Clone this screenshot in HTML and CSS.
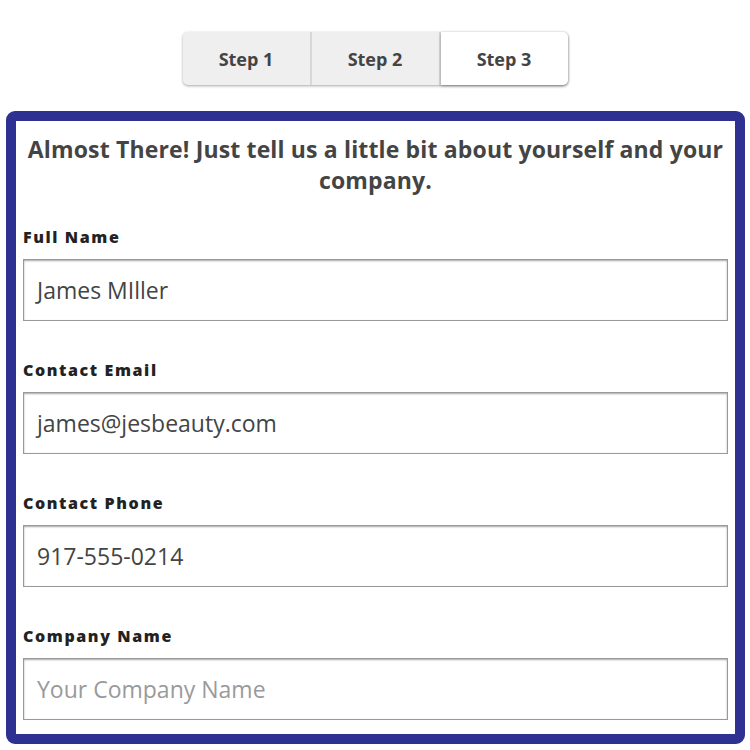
FILE: index.html
```html
<!DOCTYPE html>
<html>
<head>
<meta charset="utf-8">
<link rel="stylesheet" href="styles.css">
</head>
<body>
<div class="page">
  <nav class="steps">
    <div class="step">Step 1</div>
    <div class="step">Step 2</div>
    <div class="step active">Step 3</div>
  </nav>
  <form class="card">
    <h1 class="title">Almost There! Just tell us a little bit about yourself and your company.</h1>
    <div class="field">
      <label class="label">Full Name</label>
      <div class="input">James MIller</div>
    </div>
    <div class="field">
      <label class="label">Contact Email</label>
      <div class="input">james@jesbeauty.com</div>
    </div>
    <div class="field">
      <label class="label">Contact Phone</label>
      <div class="input">917-555-0214</div>
    </div>
    <div class="field">
      <label class="label">Company Name</label>
      <div class="input placeholder">Your Company Name</div>
    </div>
  </form>
</div>
</body>
</html>
```
FILE: styles.css
```css
html, body {
  margin: 0;
  padding: 0;
  background: #fff;
}
.page {
  width: 750px;
  height: 750px;
  box-sizing: border-box;
  padding-top: 32px;
  font-family: "Open Sans", Lato, sans-serif;
  display: flex;
  flex-direction: column;
  align-items: center;
}
.steps {
  display: flex;
  width: 385px;
  height: 53px;
  border-radius: 5px;
  box-shadow: 0 1px 3px rgba(0,0,0,0.35);
  background: #efefef;
}
.step {
  flex: 1;
  display: flex;
  align-items: center;
  justify-content: center;
  font-weight: 700;
  font-size: 18px;
  color: #444;
  border-right: 2px solid #d8d8d8;
}
.step:first-child {
  border-radius: 5px 0 0 5px;
}
.step.active {
  background: #fff;
  border-right: none;
  border-radius: 0 5px 5px 0;
  box-shadow: 0 1px 3px rgba(0,0,0,0.35);
}
.card {
  margin: 26px 0 0 6px;
  width: 739px;
  box-sizing: border-box;
  align-self: flex-start;
  border: 10px solid #2e3192;
  border-radius: 9px;
  padding: 13px 7px 14px 7px;
  display: flex;
  flex-direction: column;
  gap: 38px;
}
.title {
  margin: 0 0 -8px 0;
  text-align: center;
  font-size: 23px;
  line-height: 31px;
  font-weight: 700;
  letter-spacing: 0.15px;
  color: #444;
}
.field {
  display: flex;
  flex-direction: column;
  gap: 11px;
}
.label {
  font-size: 16px;
  line-height: 22px;
  font-weight: 800;
  letter-spacing: 1.6px;
  color: #222;
}
.input {
  height: 62px;
  box-sizing: border-box;
  border: 1px solid #999;
  box-shadow: inset 0 1px 2px rgba(0,0,0,0.35);
  padding: 0 13px;
  display: flex;
  align-items: center;
  font-size: 23px;
  color: #444;
}
.input.placeholder {
  color: #9a9a9a;
}
```
